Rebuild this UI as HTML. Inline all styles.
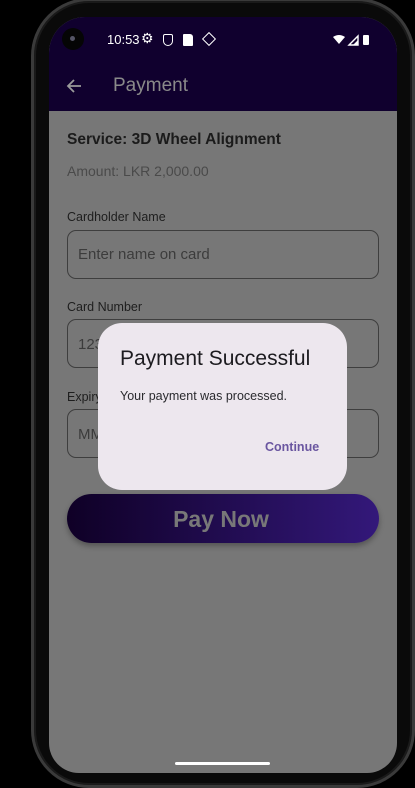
<!DOCTYPE html>
<html><head><style>
*{margin:0;padding:0;box-sizing:border-box}
html,body{width:415px;height:779px}
body{background:#000;position:relative;overflow:hidden;font-family:"Liberation Sans",Roboto,sans-serif}
.frame{position:absolute;left:31px;top:-2px;width:384px;height:790px;border-radius:58px;border:3px solid #3a3a3a;background:#0a0a0a;box-shadow:inset 0 0 0 2px #1a1a1a}
.screen{position:absolute;left:49px;top:17px;width:348px;height:756px;border-radius:36px 36px 30px 30px;overflow:hidden;background:#777}
.bar{position:absolute;left:0;top:0;width:348px;height:94px;background:#10002e}
.t{position:absolute;white-space:nowrap}
.field{position:absolute;left:18px;width:312px;height:49px;border:1px solid #3e3e3e;border-radius:9px}
.lbl{font-size:12.5px;color:#1e1e1e;font-weight:500}
.ph{font-size:15px;color:#3c3c3c}
</style></head><body>
<div class="frame"></div>
<div class="screen">
 <div class="bar"></div>
 <div style="position:absolute;left:13px;top:11px;width:22px;height:22px;border-radius:50%;background:#050505"></div>
 <div style="position:absolute;left:21px;top:19px;width:5px;height:5px;border-radius:50%;background:#556"></div>
 <div class="t" style="left:58px;top:15px;font-size:13px;color:#fff">10:53</div>
 <div class="t" style="left:92px;top:13px;font-size:14px;color:#fff">⚙</div>
 <div style="position:absolute;left:114px;top:17px;width:10px;height:12px;border:1.8px solid #fff;border-radius:2px 2px 5px 5px"></div>
 <div style="position:absolute;left:134px;top:17px;width:10px;height:12px;background:#fff;border-radius:1px 3px 1px 1px"></div>
 <div style="position:absolute;left:155px;top:17px;width:10px;height:10px;border:1.8px solid #fff;transform:rotate(45deg)"></div>
 <svg style="position:absolute;left:284px;top:17px" width="50" height="12"><path d="M0 3 Q6 -1 12 3 L6 10Z" fill="#fff"/><path d="M16 11 L25 2 L25 11Z" fill="none" stroke="#fff" stroke-width="1.4"/><path d="M20 11 L25 6 L25 11Z" fill="#fff"/><rect x="30" y="1" width="6" height="10" rx="1" fill="#fff"/></svg>
 <svg style="position:absolute;left:17px;top:62px" width="16" height="14"><path d="M15 7H2M8 1L2 7l6 6" stroke="#9a9a9a" stroke-width="1.8" fill="none"/></svg>
 <div class="t" style="left:64px;top:58px;font-size:19px;color:#8a8a8a">Payment</div>
 <div class="t" style="left:18px;top:114px;font-size:15.5px;font-weight:bold;color:#1b1b1b">Service: 3D Wheel Alignment</div>
 <div class="t" style="left:18px;top:146px;font-size:14px;color:#4a4a4a">Amount: LKR 2,000.00</div>
 <div class="t lbl" style="left:18px;top:193px">Cardholder Name</div>
 <div class="field" style="top:213px"></div>
 <div class="t ph" style="left:29px;top:229px">Enter name on card</div>
 <div class="t lbl" style="left:18px;top:283px">Card Number</div>
 <div class="field" style="top:302px"></div>
 <div class="t ph" style="left:29px;top:319px">1234</div>
 <div class="t lbl" style="left:18px;top:373px">Expiry Date</div>
 <div class="field" style="top:392px"></div>
 <div class="t ph" style="left:29px;top:409px">MM/YY</div>
 <div style="position:absolute;left:18px;top:477px;width:312px;height:49px;border-radius:25px;background:linear-gradient(90deg,#0f0026,#33187a);box-shadow:0 3px 6px rgba(0,0,0,.3)"></div>
 <div class="t" style="left:16px;width:312px;text-align:center;top:489px;font-size:23px;font-weight:bold;color:#787878">Pay Now</div>
 <div style="position:absolute;left:49px;top:306px;width:249px;height:167px;border-radius:24px;background:#ede7ee">
  <div class="t" style="left:22px;top:24px;font-size:21px;color:#1c1b1f">Payment Successful</div>
  <div class="t" style="left:22px;top:66px;font-size:12.5px;color:#2a2a2e">Your payment was processed.</div>
  <div class="t" style="left:167px;top:117px;font-size:12.5px;font-weight:bold;color:#6a56a0">Continue</div>
 </div>
 <div style="position:absolute;left:126px;top:745px;width:95px;height:3px;border-radius:2px;background:#fff"></div>
</div>
</body></html>
